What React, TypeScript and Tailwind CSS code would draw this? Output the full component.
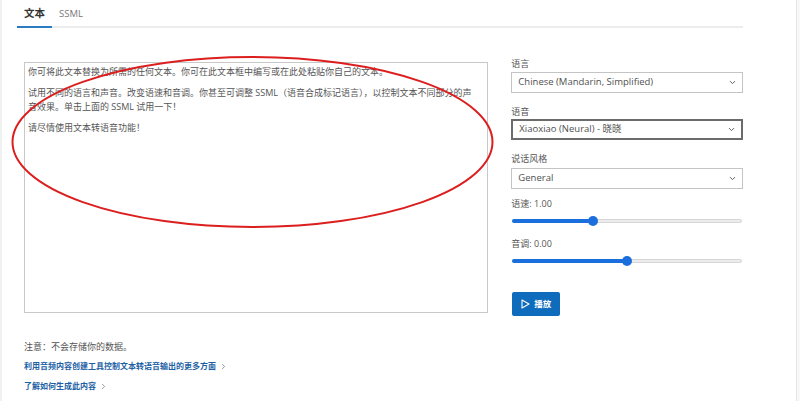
import { ChevronDown, ChevronRight } from "lucide-react";

const font = { fontFamily: '"Open Sans", "Noto Sans CJK SC", sans-serif' };

function Select({ value, focused }: { value: string; focused?: boolean }) {
  return (
    <div
      className={
        "flex h-[21px] items-center justify-between bg-white pl-[6px] pr-[5px] text-[9.5px] text-[#505050] " +
        (focused ? "border-2 border-[#6b6b6b] pl-[5px]" : "border border-[#c4c4c4]")
      }
    >
      <span>{value}</span>
      <ChevronDown size={9} strokeWidth={2.5} className="text-[#555]" />
    </div>
  );
}

function Slider({ pct }: { pct: number }) {
  return (
    <div className="relative h-[10px] w-full">
      <div className="absolute left-0 right-0 top-[3px] h-[4px] rounded-full border border-[#d6d6d6] bg-[#ececec]" />
      <div
        className="absolute left-0 top-[3px] h-[4px] rounded-full bg-[#1a6fdc]"
        style={{ width: `${pct}%` }}
      />
      <div
        className="absolute top-0 h-[10px] w-[10px] -translate-x-1/2 rounded-full bg-[#1a6fdc]"
        style={{ left: `${pct}%` }}
      />
    </div>
  );
}

export default function App() {
  return (
    <div className="relative h-[401px] w-[800px] overflow-hidden bg-white" style={font}>
      <div className="absolute left-0 top-0 h-full w-[2px] bg-[#f1f1f1]" />
      <div className="absolute right-0 top-0 h-full w-[4px] border-l border-[#e6e6e6] bg-[#f8f8f8]" />

      <div className="ml-[17px] w-[726px]">
        {/* tabs */}
        <div className="flex h-[28px] border-b-2 border-[#ececec]">
          <div className="relative flex items-center px-[7px] pt-[2px] text-[10.5px] font-bold text-[#333]">
            文本
            <div className="absolute -bottom-[2px] left-0 right-0 h-[2px] bg-[#2a7bbf]" />
          </div>
          <div className="flex items-center px-[7px] pt-[2px] text-[9.5px] text-[#777]">SSML</div>
        </div>

        <div className="mt-[29px] flex items-start gap-[23px] pl-[7px]">
          {/* text box */}
          <div className="mt-[5px] h-[251px] w-[465px] border border-[#c8c8c8] pl-[3px] pr-[10px] pt-[2px] text-[9px] leading-[14px] text-[#555]">
            <p>你可将此文本替换为所需的任何文本。你可在此文本框中编写或在此处粘贴你自己的文本。</p>
            <p className="mt-[7px]">
              试用不同的语言和声音。改变语速和音调。你甚至可调整 SSML（语音合成标记语言），以控制文本不同部分的声音效果。单击上面的 SSML 试用一下！
            </p>
            <p className="mt-[7px]">请尽情使用文本转语音功能！</p>
          </div>

          {/* controls */}
          <div className="w-[232px] text-[9px] text-[#555]">
            <div className="h-[14px] leading-[14px]">语言</div>
            <div className="mt-[1px]">
              <Select value="Chinese (Mandarin, Simplified)" />
            </div>
            <div className="mt-[12px] h-[14px] leading-[14px]">语音</div>
            <div>
              <Select value="Xiaoxiao (Neural) - 晓晓" focused />
            </div>
            <div className="mt-[12px] h-[14px] leading-[14px]">说话风格</div>
            <div className="mt-[2px]">
              <Select value="General" />
            </div>
            <div className="mt-[8px] h-[14px] leading-[14px]">语速: 1.00</div>
            <div className="mt-[5px] pl-[1px] pr-[1px]">
              <Slider pct={35} />
            </div>
            <div className="mt-[11px] h-[14px] leading-[14px]">音调: 0.00</div>
            <div className="mt-[5px] pl-[1px] pr-[1px]">
              <Slider pct={50} />
            </div>
            <button className="ml-[1px] mt-[26px] flex h-[24px] w-[48px] items-center justify-center gap-[4px] rounded-[2px] bg-[#0f6cbd] text-[8.5px] font-bold text-white">
              <svg width="9" height="10" viewBox="0 0 9 10" fill="none">
                <path d="M1 1 L8 5 L1 9 Z" stroke="white" strokeWidth="1.1" strokeLinejoin="round" />
              </svg>
              播放
            </button>
          </div>
        </div>

        {/* footer */}
        <div className="mt-[24px] pl-[7px]">
          <div className="h-[14px] text-[9px] leading-[14px] text-[#555]">注意：不会存储你的数据。</div>
          <div className="mt-[5px] flex h-[14px] items-center gap-[3px] text-[8px] font-semibold text-[#1c5fa5]">
            利用音频内容创建工具控制文本转语音输出的更多方面
            <ChevronRight size={9} className="text-[#777]" />
          </div>
          <div className="mt-[6px] flex h-[14px] items-center gap-[3px] text-[8px] font-semibold text-[#1c5fa5]">
            了解如何生成此内容
            <ChevronRight size={9} className="text-[#777]" />
          </div>
        </div>
      </div>

      {/* red annotation ellipse */}
      <svg className="pointer-events-none absolute left-0 top-0" width="800" height="401">
        <ellipse cx="252.5" cy="142" rx="240" ry="85" fill="none" stroke="#dc1e1e" strokeWidth="2" />
      </svg>
    </div>
  );
}
